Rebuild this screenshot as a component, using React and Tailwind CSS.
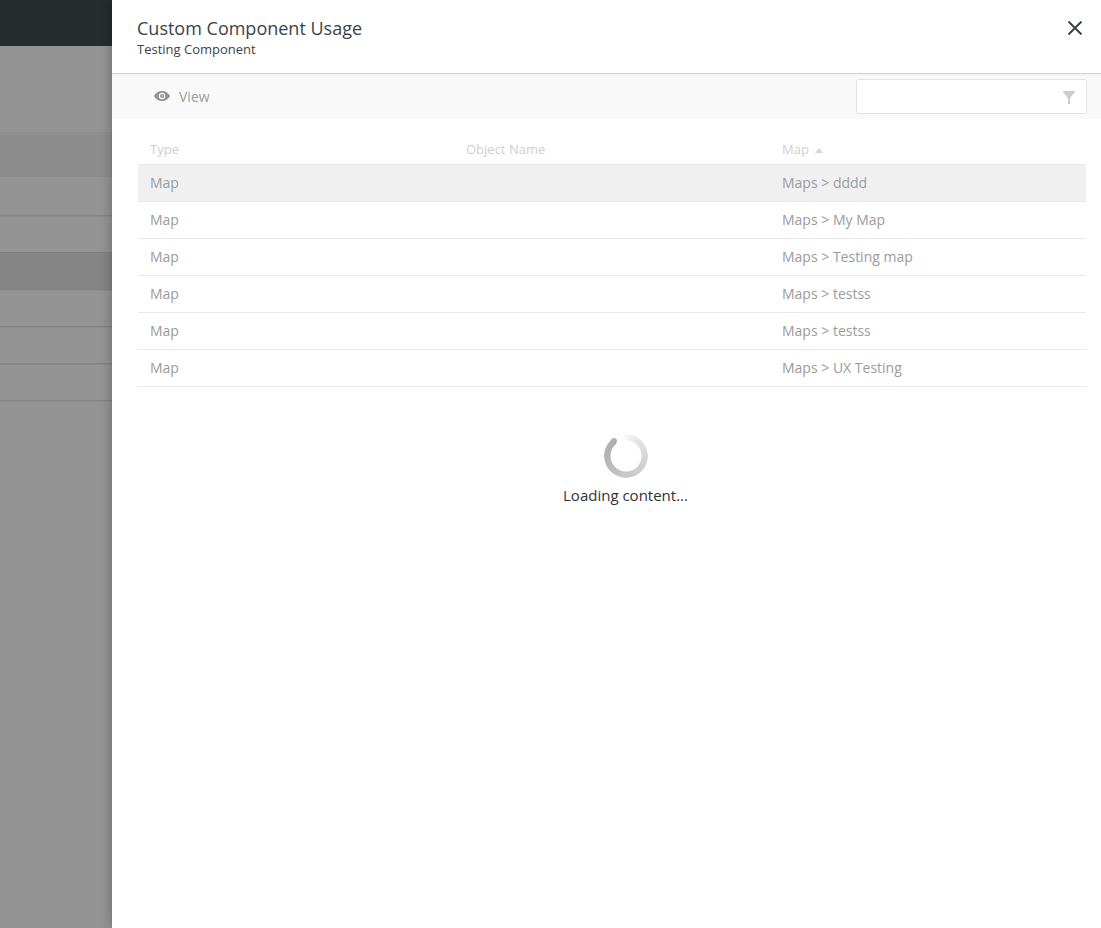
import { useState } from "react";

const rows = [
  "Maps > dddd",
  "Maps > My Map",
  "Maps > Testing map",
  "Maps > testss",
  "Maps > testss",
  "Maps > UX Testing",
];

function EyeIcon() {
  return (
    <svg width="16" height="12" viewBox="0 0 16 12" className="block" aria-hidden="true">
      <path
        fill="#8f9596"
        fillRule="evenodd"
        d="M8 0C4.300 0 1.300 2.100 0 5c1.300 2.900 4.300 5 8 5s6.700-2.100 8-5c-1.300-2.900-4.300-5-8-5Zm0 8.200A3.200 3.200 0 1 1 8 1.800a3.200 3.200 0 0 1 0 6.400Z"
      />
      <circle cx="8" cy="5" r="2" fill="#8f9596" />
      <circle cx="8" cy="5" r="0.700" fill="#d4d6d6" />
    </svg>
  );
}

function Spinner() {
  return (
    <div className="relative size-11" aria-hidden="true">
      <div className="size-11 rounded-full bg-[conic-gradient(#f6f6f6_0deg,#e6e6e6_35deg,#d6d6d6_90deg,#c8c8c8_180deg,#b4b4b4_270deg,#b0b0b0_320deg,transparent_320deg,transparent_340deg,#f9f9f9_360deg)] [mask:radial-gradient(circle,transparent_15px,black_16px)]" />
      <span className="absolute top-1 left-[7px] size-[6px] rounded-full bg-[#b0b0b0]" />
    </div>
  );
}

function Backdrop() {
  return (
    <aside className="w-28 shrink-0 bg-[#949494]" aria-hidden="true">
      <div className="h-[46px] bg-[#272c2f]" />
      <div className="mt-[86px] h-[45px] bg-[#8d8d8d]" />
      <div className="h-[39px] border-b border-[#838383] shadow-[0_1px_0_#8e8e8e]" />
      <div className="h-9" />
      <div className="h-[38px] border-y border-[#808080] bg-[#858585] shadow-[0_1px_0_#8e8e8e]" />
      <div className="h-[37px] border-b border-[#838383] shadow-[0_1px_0_#8e8e8e]" />
      <div className="h-[37px] border-b border-[#838383] shadow-[0_1px_0_#8e8e8e]" />
      <div className="h-[37px] border-b border-[#838383] shadow-[0_1px_0_#8e8e8e]" />
    </aside>
  );
}

export default function App() {
  const [filter, setFilter] = useState("");

  return (
    <div className="flex min-h-screen bg-white font-['Open_Sans',sans-serif] text-[#3c4347]">
      <Backdrop />
      <main className="relative min-w-0 flex-1 bg-white shadow-[0_0_12px_rgba(0,0,0,0.3)]">
        <header className="flex h-[74px] items-start justify-between border-b border-[#d2d3d3] pt-4 pr-[18px] pl-[25px]">
          <div>
            <h1 className="text-lg leading-6">Custom Component Usage</h1>
            <p className="text-[13px] leading-[18px]">Testing Component</p>
          </div>
          <button type="button" aria-label="Close" className="mt-1 p-px">
            <svg width="14" height="14" viewBox="0 0 14 14" className="block" aria-hidden="true">
              <path d="M0.500 0.500l13 13M13.500 0.500l-13 13" stroke="#3c4347" strokeWidth="2" />
            </svg>
          </button>
        </header>

        <div className="flex h-[45px] items-center justify-between bg-[#f9f9f9] pr-[14px] pl-[42px] shadow-[inset_0_2px_2px_-1px_rgba(0,0,0,0.05)]">
          <button type="button" className="flex items-center gap-[9px] text-sm text-[#9a9fa0]">
            <EyeIcon />
            View
          </button>
          <div className="relative">
            <input
              type="text"
              aria-label="Filter"
              value={filter}
              onChange={(e) => setFilter(e.target.value)}
              className="block h-[35px] w-[231px] rounded-[2px] border border-[#e4e4e4] bg-white pr-8 pl-2 text-sm outline-none"
            />
            <svg width="12" height="13" viewBox="0 0 12 13" className="absolute top-3 right-3" aria-hidden="true">
              <path d="M0 0h12v1L7 7v6H5V7L0 1Z" fill="#cdcdcd" />
            </svg>
          </div>
        </div>

        <div className="pt-4 pr-[15px] pl-[26px]">
          <table className="w-full table-fixed border-collapse text-left text-sm text-[#999c9d]">
            <thead>
              <tr className="h-[29px] text-[13px] text-[#cfcfcf]">
                <th scope="col" className="px-3 font-normal">Type</th>
                <th scope="col" className="px-3 font-normal">Object Name</th>
                <th scope="col" className="px-3 font-normal" aria-sort="ascending">
                  <span className="flex items-center gap-1.5">
                    Map
                    <svg width="8" height="5" viewBox="0 0 8 5" className="mt-0.5" aria-hidden="true">
                      <path d="M4 0l4 5H0Z" fill="#d6d6d6" />
                    </svg>
                  </span>
                </th>
              </tr>
            </thead>
            <tbody>
              {rows.map((path, i) => (
                <tr
                  key={i}
                  className="h-[37px] border-y border-[#e8e8e8] first:bg-[#f0f0f0]"
                >
                  <td className="px-3">Map</td>
                  <td className="px-3" />
                  <td className="px-3">{path}</td>
                </tr>
              ))}
            </tbody>
          </table>
        </div>

        <div role="status" className="flex flex-col items-center gap-1.5 pt-[47px] pl-[38px]">
          <Spinner />
          <p className="text-[15px] leading-[22px] text-[#333333]">Loading content...</p>
        </div>
      </main>
    </div>
  );
}
